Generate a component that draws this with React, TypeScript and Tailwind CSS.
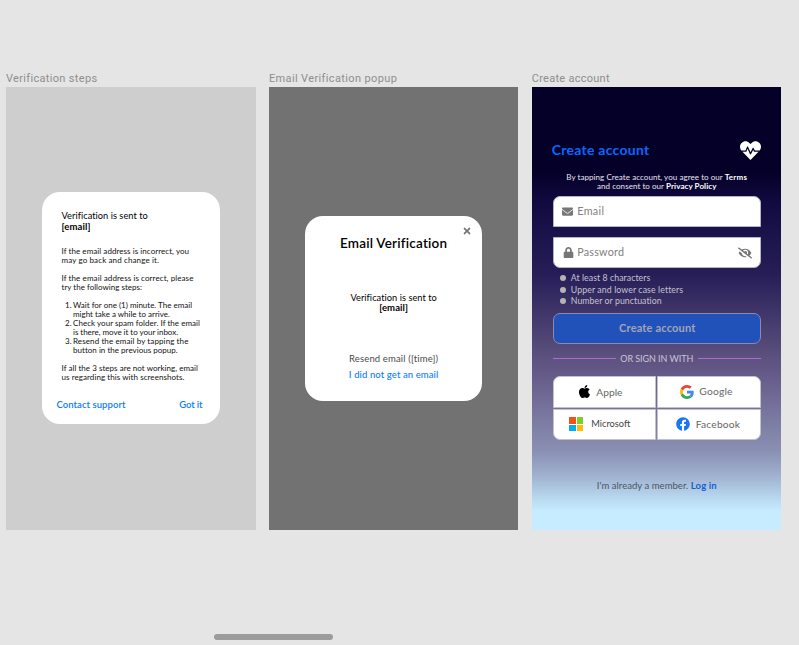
import React from "react";
import { FaApple, FaEnvelope, FaEyeSlash, FaFacebook, FaHeartbeat, FaLock, FaTimes } from "react-icons/fa";

function Frame({ title, labelClass, className, children }: { title: string; labelClass: string; className: string; children: React.ReactNode }) {
  return (
    <section className="w-[249.5px] shrink-0">
      <h2 className={`h-[14.5px] whitespace-nowrap font-['Roboto',sans-serif] text-[11px] leading-[14px] text-[#8e8e8e] ${labelClass}`}>{title}</h2>
      <div className={`h-[443.5px] overflow-hidden ${className}`}>{children}</div>
    </section>
  );
}

function VerificationSteps() {
  return (
    <div className="ml-[36px] mt-[105.5px] flex h-[232px] w-[177.5px] flex-col rounded-[18px] bg-white pt-[18px] text-[8px] leading-[9px] text-[#111] whitespace-nowrap">
      <div className="pl-[19.5px]">
        <p className="text-[9.25px] leading-[11px] tracking-[0.03px] text-black">Verification is sent to</p>
        <p className="text-[9.5px] font-bold leading-[11px] tracking-[0.1px] text-black">[email]</p>
        <p className="mt-[14.5px] tracking-[0.06px]">If the email address is incorrect, you</p>
        <p className="tracking-[0.125px]">may go back and change it.</p>
        <p className="mt-[9px] tracking-[0.093px]">If the email address is correct, please</p>
        <p className="tracking-[0.013px]">try the following steps:</p>
        <ol className="mt-[9px]">
          <li className="flex">
            <span className="w-[11.5px] pl-[3.5px]">1.</span>
            <div>
              <p>Wait for one (1) minute. The email</p>
              <p>might take a while to arrive.</p>
            </div>
          </li>
          <li className="flex">
            <span className="w-[11.5px] pl-[3.5px]">2.</span>
            <div>
              <p className="tracking-[0.043px]">Check your spam folder. If the email</p>
              <p className="tracking-[-0.034px]">is there, move it to your inbox.</p>
            </div>
          </li>
          <li className="flex">
            <span className="w-[11.5px] pl-[3.5px]">3.</span>
            <div>
              <p className="tracking-[0.106px]">Resend the email by tapping the</p>
              <p className="tracking-[0.026px]">button in the previous popup.</p>
            </div>
          </li>
        </ol>
        <p className="mt-[9px] tracking-[0.04px]">If all the 3 steps are not working, email</p>
        <p className="tracking-[0.067px]">us regarding this with screenshots.</p>
      </div>
      <div className="mt-[17px] flex justify-between pl-[14.5px] pr-[17px] text-[9.5px] font-semibold leading-[12px] text-[#0a7cff]">
        <span className="tracking-[0.06px]">Contact support</span>
        <span className="tracking-[-0.1px]">Got it</span>
      </div>
    </div>
  );
}

function EmailPopup() {
  return (
    <div className="ml-[36px] mt-[129px] flex h-[185.5px] w-[177.5px] flex-col items-center rounded-[18px] bg-white text-[9px] leading-[11px] text-black whitespace-nowrap">
      <FaTimes className="mr-[10.5px] mt-[10px] size-[10px] self-end text-[#777]" />
      <h3 className="-mt-[1px] text-[13.5px] font-semibold leading-[16px] tracking-[0.2px]">Email Verification</h3>
      <p className="mt-[41px] text-[9.25px] tracking-[0.04px]">Verification is sent to</p>
      <p className="-mt-[0.5px] text-[9.5px] font-bold tracking-[0.1px]">[email]</p>
      <p className="mt-[40px] text-[9.5px] tracking-[0.145px] text-[#4a4a4a]">Resend email ([time])</p>
      <p className="mt-[4.5px] text-[9.5px] font-medium tracking-[0.1px] text-[#0a7cff]">I did not get an email</p>
    </div>
  );
}

function GoogleLogo() {
  return (
    <svg viewBox="0 0 48 48" className="size-[14px]">
      <path fill="#EA4335" d="M24 9.5c3.54 0 6.71 1.22 9.21 3.6l6.85-6.85C35.9 2.38 30.47 0 24 0 14.62 0 6.51 5.38 2.56 13.22l7.98 6.19C12.43 13.72 17.74 9.5 24 9.5z" />
      <path fill="#4285F4" d="M46.98 24.55c0-1.57-.15-3.09-.38-4.55H24v9.02h12.94c-.58 2.96-2.26 5.48-4.78 7.18l7.73 6c4.51-4.18 7.09-10.36 7.09-17.65z" />
      <path fill="#FBBC05" d="M10.53 28.59c-.48-1.45-.76-2.99-.76-4.59s.27-3.14.76-4.59l-7.98-6.19C.92 16.46 0 20.12 0 24c0 3.88.92 7.54 2.56 10.78l7.97-6.19z" />
      <path fill="#34A853" d="M24 48c6.48 0 11.93-2.13 15.89-5.81l-7.73-6c-2.15 1.45-4.92 2.3-8.16 2.3-6.26 0-11.57-4.22-13.47-9.91l-7.98 6.19C6.51 42.62 14.62 48 24 48z" />
    </svg>
  );
}

function MicrosoftLogo() {
  return (
    <div className="grid size-[14px] grid-cols-2 gap-[0.5px]">
      <i className="bg-[#f1511b]" />
      <i className="bg-[#80cc28]" />
      <i className="bg-[#00adef]" />
      <i className="bg-[#fbbc09]" />
    </div>
  );
}

function CreateAccount() {
  return (
    <div className="flex h-full flex-col whitespace-nowrap pl-[21px] pr-[20.5px]">
      <div className="mt-[53.5px] flex h-[21px] items-center justify-between">
        <h1 className="-ml-[1px] -mt-[2px] text-[14px] font-bold tracking-[0.26px] text-[#0868ff]">Create account</h1>
        <FaHeartbeat className="size-[21px] text-white" />
      </div>
      <div className="mt-[12px] text-center text-[8px] leading-[9px] text-[#e8e6f0]">
        <p className="tracking-[0.06px]">By tapping Create account, you agree to our <b className="tracking-[0.237px] text-white">Terms</b></p>
        <p className="tracking-[0.055px]">and consent to our <b className="tracking-[0.08px] text-white">Privacy Policy</b></p>
      </div>
      <div className="mt-[5px] flex h-[31px] items-center rounded-t-[7px] border border-[#b5b2c5] bg-white pl-[8.5px] text-[10.75px] text-[#808080]">
        <FaEnvelope className="size-[11px] text-[#777]" />
        <span className="ml-[4px] tracking-[0.33px]">Email</span>
      </div>
      <div className="mt-[10px] flex h-[31px] items-center rounded-b-[7px] border border-[#b5b2c5] bg-white pl-[9px] pr-[8px] text-[10.75px] text-[#808080]">
        <FaLock className="size-[11px] text-[#777]" />
        <span className="ml-[3.5px] tracking-[0.22px]">Password</span>
        <FaEyeSlash className="ml-auto size-[14px] text-[#777]" />
      </div>
      <ul className="mt-[4px] pl-[7px] text-[8.75px] leading-[11.7px] text-[#c5c2d0]">
        <li className="flex items-center gap-[5px]"><i className="size-[6px] rounded-full bg-[#b5b3b5]" /><span className="tracking-[0.06px]">At least 8 characters</span></li>
        <li className="flex items-center gap-[5px]"><i className="size-[6px] rounded-full bg-[#b5b3b5]" /><span className="tracking-[0.1px]">Upper and lower case letters</span></li>
        <li className="flex items-center gap-[5px]"><i className="size-[6px] rounded-full bg-[#b5b3b5]" /><span className="tracking-[0.05px]">Number or punctuation</span></li>
      </ul>
      <button className="mt-[5.4px] h-[31px] w-full rounded-[7px] border border-[#8d88b0] bg-[#2052ba] pl-[1px] pt-[1px] text-[11px] font-bold tracking-[0.18px] text-[#a5a3b8]">Create account</button>
      <div className="mt-[9px] flex items-center text-[9px] leading-[12px] text-[#c9c6d6]">
        <span className="h-px flex-1 bg-[#b06ad0]" />
        <span className="mx-[4.5px] tracking-[-0.06px]">OR SIGN IN WITH</span>
        <span className="h-px flex-1 bg-[#b06ad0]" />
      </div>
      <div className="mt-[11.5px] grid grid-cols-2 grid-rows-[31.5px_31.5px] gap-px text-[10.25px] text-[#666]">
        <div className="flex items-center rounded-tl-[7px] border border-[#c3c1d0] bg-white pl-[23.5px] pt-[1px]"><FaApple className="-mt-[1px] size-[15px] text-black" /><span className="ml-[4px]">Apple</span></div>
        <div className="flex items-center rounded-tr-[7px] border border-[#c3c1d0] bg-white pl-[21.5px]"><GoogleLogo /><span className="ml-[5.5px] tracking-[0.2px]">Google</span></div>
        <div className="flex items-center rounded-bl-[7px] border border-[#c3c1d0] bg-white pl-[15.5px]"><MicrosoftLogo /><span className="ml-[8px] text-[9.25px] text-[#444]">Microsoft</span></div>
        <div className="flex items-center rounded-br-[7px] border border-[#c3c1d0] bg-white pl-[17.5px]"><FaFacebook className="size-[14px] text-[#1877f2]" /><span className="ml-[6px] tracking-[0.18px]">Facebook</span></div>
      </div>
      <p className="mt-[40px] text-center text-[9.5px] leading-[12px] tracking-[0.04px] text-[#4e5560]">I'm already a member. <b className="tracking-[0.12px] text-[#145fd0]">Log in</b></p>
    </div>
  );
}

export default function App() {
  return (
    <main className="flex h-[645px] w-[799px] flex-col overflow-hidden bg-[#e5e5e5] pt-[72px] font-['Lato',sans-serif]">
      <div className="flex gap-[13.4px] pl-[6px]">
        <Frame title="Verification steps" labelClass="tracking-[0.325px]" className="bg-[#cecece]"><VerificationSteps /></Frame>
        <Frame title="Email Verification popup" labelClass="tracking-[0.374px]" className="bg-[#727272]"><EmailPopup /></Frame>
        <Frame title="Create account" labelClass="tracking-[0.266px]" className="bg-[linear-gradient(to_bottom,#050028_0px,#050028_85px,#110a40_115px,#271e58_188px,#544a78_258px,#645886_284px,#8a90b3_364px,#9fb0cf_388px,#b4d3ea_408px,#c7ebff_424px)]"><CreateAccount /></Frame>
      </div>
      <div className="mb-[5px] ml-[214px] mt-auto h-[6px] w-[119px] rounded-full bg-[#9c9c9c]" />
    </main>
  );
}
